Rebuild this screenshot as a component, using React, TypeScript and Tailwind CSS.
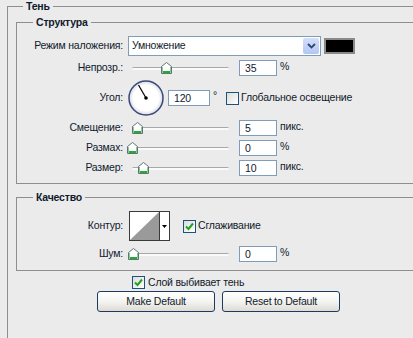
import React from 'react';

const line = 'border-[#8e8e8e]';

function Thumb() {
  return (
    <svg width="11" height="12" viewBox="0 0 11 12">
      <path d="M0.5 4.5 L5.5 0.5 L10.5 4.5 V11.5 H0.5 Z" fill="#ffffff" stroke="#66707c" />
      <path d="M1.5 10 H9.5" stroke="#1fae2f" strokeWidth="2" />
      <path d="M1.5 5 V10 M9.5 5 V10" stroke="#7fd08a" strokeWidth="1" />
    </svg>
  );
}

// thumb = x of the thumb centre, counted from the slider's left edge
function Slider({ thumb }: { thumb: number }) {
  return (
    <div className="relative flex h-[16px] w-[104px] items-center pl-[4px] pr-[3px]">
      <div className="h-[3px] w-full rounded-full border-t border-[#a8a8a8] bg-[#fafafa]" />
      <div className="absolute top-[2px]" style={{ left: thumb - 5 }}>
        <Thumb />
      </div>
    </div>
  );
}

function Field({ value, wide }: { value: string; wide?: boolean }) {
  return (
    <div
      className={
        'flex h-[16px] items-center border border-[#7f9db9] bg-white pl-[5px] leading-none ' +
        (wide ? 'w-[42px]' : 'w-[38px]')
      }
    >
      {value}
    </div>
  );
}

function Check({ on }: { on?: boolean }) {
  return (
    <div className="flex h-[13px] w-[13px] shrink-0 items-center justify-center border border-[#1c5180] bg-gradient-to-br from-[#dcdcd7] to-white">
      {on && (
        <svg width="9" height="9" viewBox="0 0 9 9">
          <path d="M1 4.5 L3.5 7 L8 1.5" fill="none" stroke="#21a121" strokeWidth="2" />
        </svg>
      )}
    </div>
  );
}

function Label({ children }: { children: React.ReactNode }) {
  return <div className="w-[106px] shrink-0 text-right">{children}</div>;
}

function SliderRow({ label, thumb, value, unit }: { label: string; thumb: number; value: string; unit: string }) {
  return (
    <div className="flex h-[16px] items-center">
      <Label>{label}</Label>
      <div className="ml-[5px]">
        <Slider thumb={thumb} />
      </div>
      <div className="ml-[7px]">
        <Field value={value} />
      </div>
      <div className="ml-[3px] self-start leading-[12px]">{unit}</div>
    </div>
  );
}

function Dial() {
  return (
    <svg width="36" height="36" viewBox="0 0 36 36">
      <defs>
        <radialGradient id="dialFill" cx="0.5" cy="0.5" r="0.5">
          <stop offset="0.75" stopColor="#ffffff" />
          <stop offset="1" stopColor="#d6d9e2" />
        </radialGradient>
      </defs>
      <circle cx="18" cy="18" r="17" fill="url(#dialFill)" stroke="#3b4a78" strokeWidth="1.5" />
      <path d="M18 18 L10.5 5" stroke="#000" strokeWidth="1.2" />
      <circle cx="18" cy="18" r="1.8" fill="#000" />
    </svg>
  );
}

function ContourPicker() {
  return (
    <svg width="41" height="30" viewBox="0 0 41 30">
      <rect x="0.5" y="0.5" width="40" height="29" fill="#ffffff" stroke="#3a3a3a" />
      <path d="M1 29 L30 1 V29 Z" fill="#9a9a9a" />
      <path d="M30.5 1 V29" stroke="#3a3a3a" />
      <path d="M33 14 H38 L35.5 17 Z" fill="#000" />
    </svg>
  );
}

function Button({ children }: { children: React.ReactNode }) {
  return (
    <div className="flex h-[21px] w-[118px] items-center justify-center rounded-[3px] border border-[#1d3a63] bg-gradient-to-b from-white via-[#f4f4f1] to-[#dedbd2]">
      {children}
    </div>
  );
}

export default function App() {
  return (
    <div className="h-[338px] w-[413px] overflow-hidden bg-[#ebebeb] font-['Liberation_Sans',Arial,sans-serif] text-[10.5px] tracking-[-0.2px] text-[#101a2c]">
      <fieldset className={'ml-[7px] h-[380px] w-[440px] border ' + line}>
        <legend className="ml-[15px] px-[3px] font-bold leading-[13px]">Тень</legend>

        <fieldset className={'ml-[8px] mt-[3px] w-[420px] border pb-[7px] pt-[7px] ' + line}>
          <legend className="ml-[16px] px-[3px] font-bold leading-[13px]">Структура</legend>

          <div className="flex h-[20px] items-center">
            <Label>Режим наложения:</Label>
            <div className="ml-[5px] flex h-[20px] w-[193px] items-stretch border border-[#7f9db9] bg-white">
              <div className="flex flex-1 items-center pl-[3px]">Умножение</div>
              <div className="m-px flex w-[16px] items-center justify-center rounded-[2px] bg-gradient-to-b from-[#d2defb] to-[#b3c6f4]">
                <svg width="9" height="6" viewBox="0 0 9 6">
                  <path d="M1 1 L4.5 4.5 L8 1" fill="none" stroke="#33466f" strokeWidth="1.8" />
                </svg>
              </div>
            </div>
            <div className="ml-[3px] h-[16px] w-[31px] border-2 border-[#8a8a8a] bg-black" />
          </div>

          <div className="mt-[4px]">
            <SliderRow label="Непрозр.:" thumb={38} value="35" unit="%" />
          </div>

          <div className="mt-[4px] flex h-[36px] items-center">
            <Label>Угол:</Label>
            <div className="ml-[5px]">
              <Dial />
            </div>
            <div className="ml-[4px]">
              <Field value="120" wide />
            </div>
            <div className="ml-[3px] w-[13px] self-start pt-[10px] leading-[10px]">°</div>
            <Check />
            <div className="ml-[2px]">Глобальное освещение</div>
          </div>

          <div className="mt-[4px]">
            <SliderRow label="Смещение:" thumb={9} value="5" unit="пикс." />
          </div>
          <div className="mt-[4px]">
            <SliderRow label="Размах:" thumb={4} value="0" unit="%" />
          </div>
          <div className="mt-[4px]">
            <SliderRow label="Размер:" thumb={15} value="10" unit="пикс." />
          </div>
        </fieldset>

        <fieldset className={'ml-[8px] mt-[7px] w-[420px] border pb-[8px] pt-[7px] ' + line}>
          <legend className="ml-[16px] px-[3px] font-bold leading-[13px]">Качество</legend>

          <div className="flex h-[30px] items-center">
            <Label>Контур:</Label>
            <div className="ml-[6px]">
              <ContourPicker />
            </div>
            <div className="ml-[13px]">
              <Check on />
            </div>
            <div className="ml-[2px]">Сглаживание</div>
          </div>

          <div className="mt-[5px]">
            <SliderRow label="Шум:" thumb={5} value="0" unit="%" />
          </div>
        </fieldset>

        <div className="mt-[5px] flex h-[13px] items-center pl-[124px]">
          <Check on />
          <div className="ml-[3px]">Слой выбивает тень</div>
        </div>

        <div className="mt-[2px] flex gap-[7px] pl-[89px]">
          <Button>Make Default</Button>
          <Button>Reset to Default</Button>
        </div>
      </fieldset>
    </div>
  );
}
